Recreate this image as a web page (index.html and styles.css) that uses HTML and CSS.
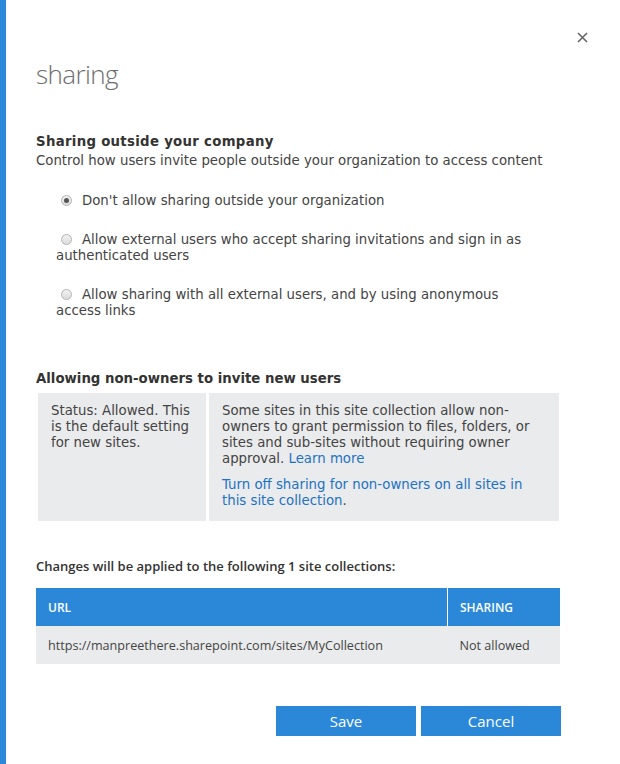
FILE: index.html
```html
<!DOCTYPE html>
<html>
<head>
<meta charset="utf-8">
<link rel="stylesheet" href="styles.css">
</head>
<body>
<div class="dialog">
  <button class="close" aria-label="Close">
    <svg width="11" height="11" viewBox="0 0 11 11"><path d="M1 1L10 10M10 1L1 10" stroke="#666" stroke-width="1.6"/></svg>
  </button>
  <h1 class="title">sharing</h1>

  <section class="section first">
    <h2 class="heading">Sharing outside your company</h2>
    <p class="desc">Control how users invite people outside your organization to access content</p>
    <div class="options">
      <label class="option"><span class="radio checked"></span>Don't allow sharing outside your organization</label>
      <label class="option"><span class="radio"></span>Allow external users who accept sharing invitations and sign in as authenticated users</label>
      <label class="option"><span class="radio"></span>Allow sharing with all external users, and by using anonymous access links</label>
    </div>
  </section>

  <section class="section second">
    <h2 class="heading">Allowing non-owners to invite new users</h2>
    <div class="infobox">
      <div class="cell left">Status: Allowed. This is the default setting for new sites.</div>
      <div class="cell right">
        <p>Some sites in this site collection allow non-owners to grant permission to files, folders, or sites and sub-sites without requiring owner approval. <a href="#">Learn more</a></p>
        <p class="turnoff"><a href="#">Turn off sharing for non-owners on all sites in this site collection</a>.</p>
      </div>
    </div>
  </section>

  <section class="section third">
    <h3 class="subheading">Changes will be applied to the following 1 site collections:</h3>
    <table class="sites">
      <thead>
        <tr><th class="col-url">URL</th><th class="col-sharing">SHARING</th></tr>
      </thead>
      <tbody>
        <tr><td>https://manpreethere.sharepoint.com/sites/MyCollection</td><td>Not allowed</td></tr>
      </tbody>
    </table>
  </section>

  <div class="actions">
    <button class="btn">Save</button>
    <button class="btn">Cancel</button>
  </div>
</div>
</body>
</html>
```

FILE: styles.css
```css
html, body {
  margin: 0;
  padding: 0;
  background: #fff;
}
.dialog {
  position: relative;
  box-sizing: border-box;
  width: 620px;
  height: 764px;
  border-left: 6px solid #2b88d8;
  padding: 0 0 0 30px;
  font-family: "DejaVu Sans", Verdana, sans-serif;
  font-size: 13.3px;
  color: #444;
}
.close {
  position: absolute;
  top: 32px;
  left: 571px;
  border: 0;
  background: none;
  padding: 0;
  width: 11px;
  height: 11px;
  cursor: pointer;
}
.close svg { display: block; }
.title {
  margin: 0;
  padding-top: 56px;
  font-family: "Open Sans", "Noto Sans", sans-serif;
  font-weight: 300;
  font-size: 26px;
  line-height: 36px;
  color: #6d6d6d;
  letter-spacing: -0.6px;
}
.section.first { margin-top: 41px; }
.heading {
  margin: 0;
  font-size: 13.3px;
  font-weight: bold;
  line-height: 18px;
  color: #333;
}
.section.first .heading { letter-spacing: 0.3px; }
.desc {
  margin: 1px 0 0;
  line-height: 18px;
}
.options {
  margin-top: 23px;
  padding-left: 20px;
  width: 476px;
}
.option {
  display: block;
  line-height: 16px;
  margin-bottom: 23px;
}
.radio {
  display: inline-block;
  box-sizing: border-box;
  width: 11px;
  height: 11px;
  border-radius: 50%;
  border: 1px solid #b3b3b3;
  background: linear-gradient(#f1f1f1, #dcdcdc);
  margin: 0 10px 0 5px;
  vertical-align: -1px;
  position: relative;
}
.radio.checked::after {
  content: "";
  position: absolute;
  left: 2px;
  top: 2px;
  width: 5px;
  height: 5px;
  border-radius: 50%;
  background: #555;
}
.section.second { margin-top: 51px; }
.infobox {
  display: flex;
  gap: 3px;
  margin: 5px 0 0 2px;
  width: 521px;
  height: 128px;
}
.cell {
  background: #eaebec;
  box-sizing: border-box;
  padding: 10px 13px;
  line-height: 16px;
}
.cell.left { width: 168px; }
.cell.right { flex: 1; }
.cell p { margin: 0; }
.cell p.turnoff { margin-top: 10px; }
a {
  color: #1e72c4;
  text-decoration: none;
}
.section.third { margin-top: 36px; }
.subheading {
  margin: 0;
  font-family: "Open Sans", "Noto Sans", sans-serif;
  font-weight: 600;
  font-size: 13px;
  line-height: 18px;
  color: #333;
}
.sites {
  margin-top: 13px;
  width: 524px;
  border-collapse: collapse;
  font-family: "Open Sans", "Noto Sans", sans-serif;
  font-size: 12.6px;
}
.sites th {
  background: #2b88d8;
  color: #fff;
  text-align: left;
  font-weight: 600;
  font-size: 12px;
  height: 38px;
  padding: 0 12px;
}
.sites th.col-url { border-right: 1px solid #fff; width: 387px; }
.sites td {
  background: #eaebec;
  color: #444;
  height: 38px;
  padding: 0 12px;
}
.actions {
  display: flex;
  gap: 5px;
  margin: 42px 0 0 240px;
}
.btn {
  width: 140px;
  height: 30px;
  border: 0;
  background: #2b88d8;
  color: #fff;
  font-family: "Open Sans", "Noto Sans", sans-serif;
  font-size: 15px;
  padding: 0;
  cursor: pointer;
}
```
